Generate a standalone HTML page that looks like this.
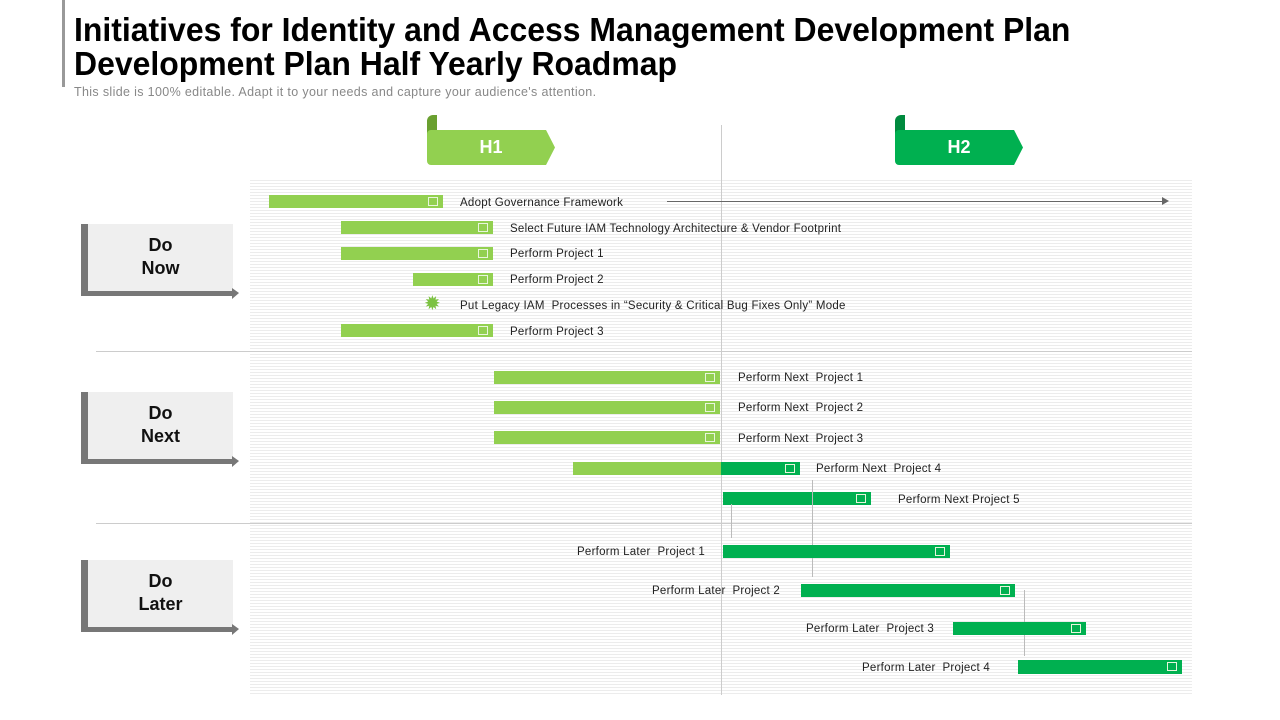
<html><head><style>
body{margin:0;width:1280px;height:720px;background:#fff;font-family:"Liberation Sans",sans-serif;position:relative;overflow:hidden}
.a{position:absolute}
.t{font-size:11.5px;color:#222;white-space:nowrap;line-height:14px;letter-spacing:0.25px}
.l{background:#92d050}.d{background:#00b050}
.b{position:absolute;height:13px}
.b i{position:absolute;right:5px;top:2px;width:8px;height:7px;border:1px solid #e8f5dc}
.lab{position:absolute;left:81px;width:152px;height:72px;background:#efefef;border-left:7px solid #777;border-bottom:5px solid #777;box-sizing:border-box;text-align:center;font-weight:bold;font-size:18px;line-height:23px;padding-top:10px;color:#111}
.lab:after{content:"";position:absolute;right:-6px;bottom:-8px;border-left:7px solid #777;border-top:5px solid transparent;border-bottom:6px solid transparent}
.tab{position:absolute;top:130px;height:35px;width:128px;color:#fff;font-weight:bold;font-size:18px;line-height:35px;text-align:center;clip-path:polygon(0 0,93% 0,100% 50%,93% 100%,0 100%);border-radius:4px 0 0 4px}
</style></head><body>
<div class="a" style="left:62px;top:0;width:3px;height:87px;background:#999"></div>
<div class="a" style="left:74px;top:13px;font-size:33px;font-weight:bold;line-height:34px;color:#000;white-space:nowrap;transform:scaleX(0.968);transform-origin:0 0">Initiatives for Identity and Access Management Development Plan<br>Development Plan Half Yearly Roadmap</div>
<div class="a" style="left:74px;top:85px;font-size:12.5px;color:#888;letter-spacing:0.35px;white-space:nowrap">This slide is 100% editable. Adapt it to your needs and capture your audience's attention.</div>
<div class="a" style="left:250px;top:178px;width:942px;height:517px;background:repeating-linear-gradient(#fff 0 2px,#ececec 2px 3px)"></div>
<div class="a" style="left:96px;top:351px;width:1096px;height:1px;background:#ccc"></div>
<div class="a" style="left:96px;top:523px;width:1096px;height:1px;background:#ccc"></div>
<div class="a" style="left:721px;top:125px;width:1px;height:570px;background:#ccc"></div>
<div class="a" style="left:427px;top:115px;width:10px;height:25px;background:#6aa030;border-radius:6px 0 0 6px"></div>
<div class="tab l" style="left:427px">H1</div>
<div class="a" style="left:895px;top:115px;width:10px;height:25px;background:#008a3e;border-radius:6px 0 0 6px"></div>
<div class="tab d" style="left:895px">H2</div>
<div class="lab" style="top:224px">Do<br>Now</div>
<div class="lab" style="top:392px">Do<br>Next</div>
<div class="lab" style="top:560px">Do<br>Later</div>
<div class="b l" style="left:269px;top:195px;width:174px"><i></i></div>
<div class="a t" style="left:460px;top:196px">Adopt Governance Framework</div>
<div class="a" style="left:667px;top:201px;width:496px;height:1px;background:#666"></div>
<div class="a" style="left:1162px;top:197px;border-left:7px solid #666;border-top:4px solid transparent;border-bottom:4px solid transparent"></div>
<div class="b l" style="left:341px;top:221px;width:152px"><i></i></div>
<div class="a t" style="left:510px;top:222px">Select Future IAM Technology Architecture &amp; Vendor Footprint</div>
<div class="b l" style="left:341px;top:247px;width:152px"><i></i></div>
<div class="a t" style="left:510px;top:247px">Perform Project 1</div>
<div class="b l" style="left:413px;top:273px;width:80px"><i></i></div>
<div class="a t" style="left:510px;top:273px">Perform Project 2</div>
<div class="a" style="left:424px;top:294px;color:#7cc242;font-size:20px;line-height:20px">✹</div>
<div class="a t" style="left:460px;top:299px">Put Legacy IAM &nbsp;Processes in “Security &amp; Critical Bug Fixes Only” Mode</div>
<div class="b l" style="left:341px;top:324px;width:152px"><i></i></div>
<div class="a t" style="left:510px;top:325px">Perform Project 3</div>
<div class="b l" style="left:494px;top:371px;width:226px"><i></i></div>
<div class="a t" style="left:738px;top:371px">Perform Next &nbsp;Project 1</div>
<div class="b l" style="left:494px;top:401px;width:226px"><i></i></div>
<div class="a t" style="left:738px;top:401px">Perform Next &nbsp;Project 2</div>
<div class="b l" style="left:494px;top:431px;width:226px"><i></i></div>
<div class="a t" style="left:738px;top:432px">Perform Next &nbsp;Project 3</div>
<div class="b l" style="left:573px;top:462px;width:148px"></div>
<div class="b d" style="left:721px;top:462px;width:79px"><i></i></div>
<div class="a t" style="left:816px;top:462px">Perform Next &nbsp;Project 4</div>
<div class="b d" style="left:723px;top:492px;width:148px"><i></i></div>
<div class="a t" style="left:898px;top:493px">Perform Next Project 5</div>
<div class="a" style="left:731px;top:504px;width:1px;height:34px;background:#bbb"></div>
<div class="a" style="left:812px;top:480px;width:1px;height:97px;background:#bbb"></div>
<div class="a" style="left:1024px;top:590px;width:1px;height:66px;background:#bbb"></div>
<div class="b d" style="left:723px;top:545px;width:227px"><i></i></div>
<div class="a t" style="left:577px;top:545px">Perform Later &nbsp;Project 1</div>
<div class="b d" style="left:801px;top:584px;width:214px"><i></i></div>
<div class="a t" style="left:652px;top:584px">Perform Later &nbsp;Project 2</div>
<div class="b d" style="left:953px;top:622px;width:133px"><i></i></div>
<div class="a t" style="left:806px;top:622px">Perform Later &nbsp;Project 3</div>
<div class="b d" style="left:1018px;top:660px;width:164px;height:14px"><i></i></div>
<div class="a t" style="left:862px;top:661px">Perform Later &nbsp;Project 4</div>
</body></html>
